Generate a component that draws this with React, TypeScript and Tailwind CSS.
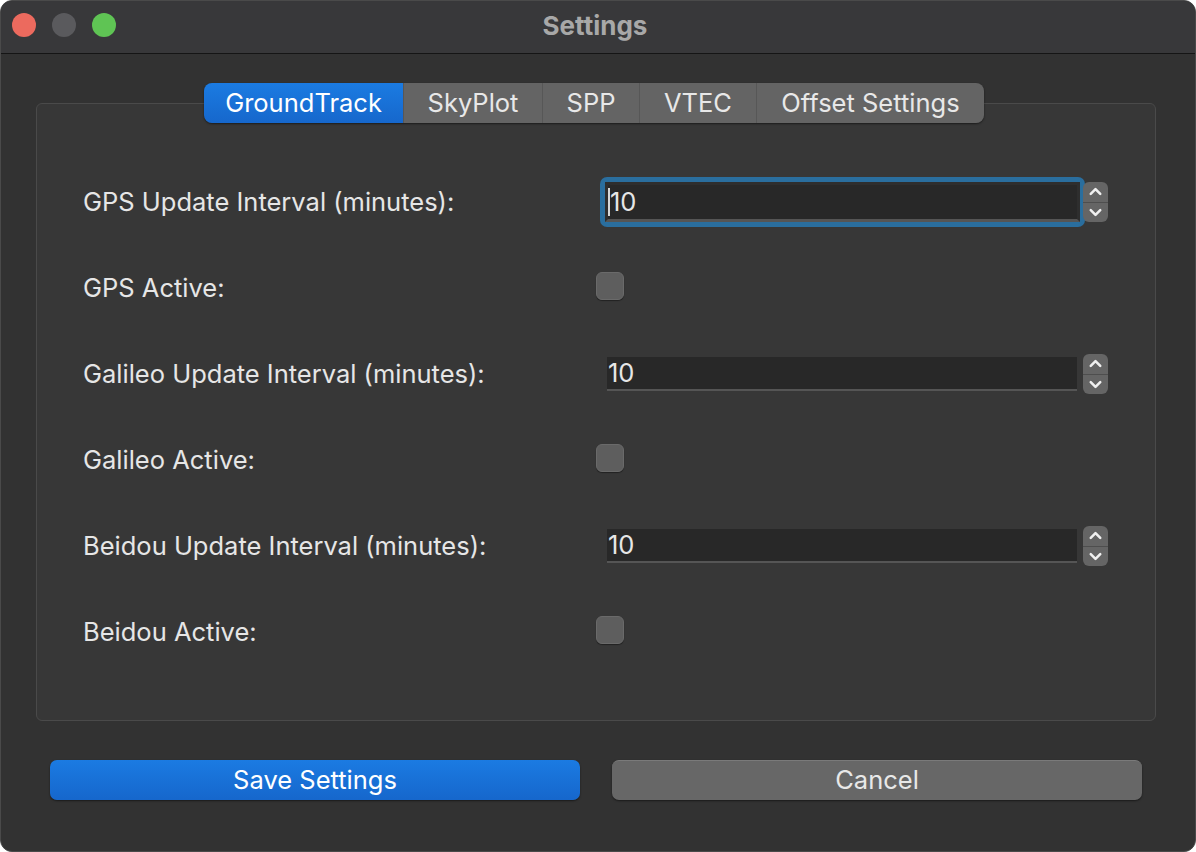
import { ChevronUp, ChevronDown } from 'lucide-react';

const tabs = ['GroundTrack', 'SkyPlot', 'SPP', 'VTEC', 'Offset Settings'];

const tabWidths: Record<string, string> = {
  GroundTrack: 'w-[199px]',
  SkyPlot: 'w-[139px]',
  SPP: 'w-[97px]',
  VTEC: 'w-[117px]',
  'Offset Settings': 'w-[228px]',
};

function Spinner({ overlap }: { overlap?: boolean }) {
  return (
    <div
      className={`relative flex h-[40px] w-[25px] flex-col overflow-hidden rounded-[6px] bg-[#656565] ${
        overlap ? '-ml-[2px]' : ''
      }`}
    >
      <div className="flex flex-1 items-center justify-center border-b border-[#4e4e4e]">
        <ChevronUp className="h-[19px] w-[19px] text-[#f0f0f0]" strokeWidth={3.2} />
      </div>
      <div className="flex flex-1 items-center justify-center">
        <ChevronDown className="h-[19px] w-[19px] text-[#f0f0f0]" strokeWidth={3.2} />
      </div>
    </div>
  );
}

function NumberRow({ label, focused }: { label: string; focused?: boolean }) {
  return (
    <div className="flex h-[86px] items-center">
      <div className="w-[563px] shrink-0 pl-[46px]">{label}</div>
      <div className="flex items-center">
        {focused ? (
          <div className="rounded-[7px] bg-[#2a6e9e] p-[5px]">
            <div className="border-[3px] border-[#2e2e2e] border-b-[#555]">
              <div className="flex h-[34px] w-[469px] items-center bg-[#282828]">
                <span className="h-[28px] w-[2px] bg-[#d8d8d8]" />
                <span>10</span>
              </div>
            </div>
          </div>
        ) : (
          <div className="ml-[7px] mr-[6px] flex h-[34px] w-[470px] items-center border-b-2 border-[#555] bg-[#282828] pl-[1px]">
            10
          </div>
        )}
        <Spinner overlap={focused} />
      </div>
    </div>
  );
}

function CheckRow({ label }: { label: string }) {
  return (
    <div className="flex h-[86px] items-center">
      <div className="w-[559px] shrink-0 pl-[46px]">{label}</div>
      <div className="-mt-[4px] h-[28px] w-[28px] rounded-[6px] border border-[#6a6a6a] bg-[#5e5e5e] shadow-[0_1px_1px_rgba(0,0,0,0.4)]" />
    </div>
  );
}

export default function App() {
  return (
    <div
      className="flex h-[852px] w-[1196px] flex-col overflow-hidden rounded-[12px] border border-[#4a4a4a] bg-[#323232] text-[25.5px] text-[#e6e6e6]"
      style={{ fontFamily: 'Inter, "Liberation Sans", sans-serif' }}
    >
      {/* Title bar */}
      <div className="relative flex h-[53px] items-center justify-center border-b border-[#151515] bg-[#38383a]">
        <div className="absolute left-[11px] top-[12px] flex gap-[16px]">
          <span className="h-[24px] w-[24px] rounded-full bg-[#ec6a5e]" />
          <span className="h-[24px] w-[24px] rounded-full bg-[#5a5a5d]" />
          <span className="h-[24px] w-[24px] rounded-full bg-[#5fc454]" />
        </div>
        <span className="-ml-[6px] -mt-[3px] text-[26px] font-bold text-[#a8a8a8]">Settings</span>
      </div>

      {/* Tab widget */}
      <div className="relative ml-[35px] mr-[39px] mt-[49px] h-[618px] rounded-[6px] border border-[#4a4a4a] bg-[#373737]">
        <div className="absolute -top-[21px] left-[167px] flex h-[40px] overflow-hidden rounded-[8px] shadow-[0_1px_2px_rgba(0,0,0,0.5)]">
          {tabs.map((t, i) => (
            <div
              key={t}
              className={`flex items-center justify-center ${tabWidths[t]} ${
                i === 0
                  ? 'bg-gradient-to-b from-[#1b7be2] to-[#1667cc] text-white'
                  : 'border-l border-[#575757] bg-[#646464] text-[#e8e8e8]'
              }`}
            >
              {t}
            </div>
          ))}
        </div>

        <div className="pt-[55px]">
          <NumberRow label="GPS Update Interval (minutes):" focused />
          <CheckRow label="GPS Active:" />
          <NumberRow label="Galileo Update Interval (minutes):" />
          <CheckRow label="Galileo Active:" />
          <NumberRow label="Beidou Update Interval (minutes):" />
          <CheckRow label="Beidou Active:" />
        </div>
      </div>

      {/* Buttons */}
      <div className="mt-[39px] flex gap-[32px] pl-[49px] pr-[53px]">
        <button className="h-[40px] flex-1 rounded-[7px] bg-gradient-to-b from-[#1b7be2] to-[#1667cc] text-white shadow-[0_1px_2px_rgba(0,0,0,0.5)]">
          Save Settings
        </button>
        <button className="h-[40px] flex-1 rounded-[7px] border-t border-[#7a7a7a] bg-[#676767] text-[#e8e8e8] shadow-[0_1px_2px_rgba(0,0,0,0.5)]">
          Cancel
        </button>
      </div>
    </div>
  );
}
